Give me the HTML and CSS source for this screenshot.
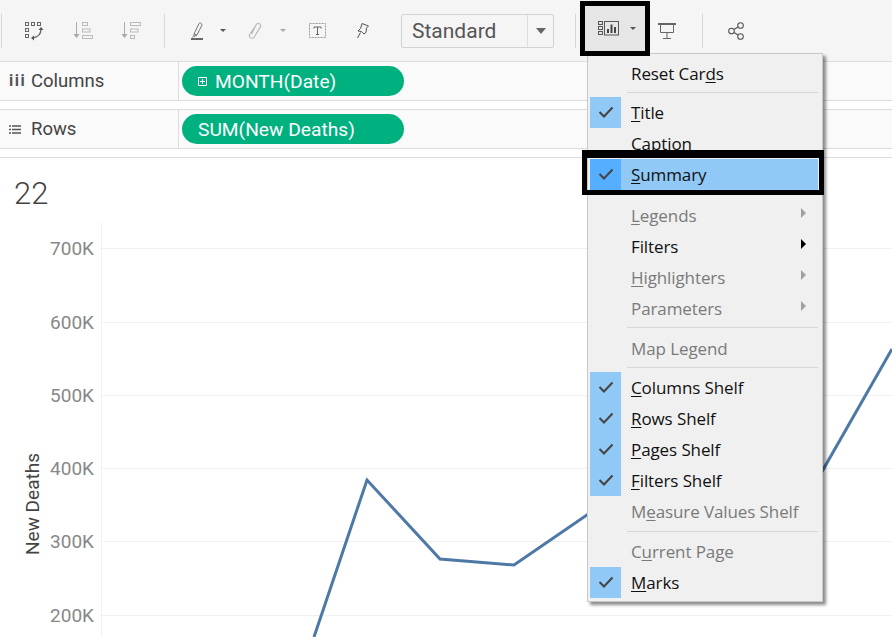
FILE: index.html
```html
<!DOCTYPE html>
<html lang="en">
<head>
<meta charset="utf-8">
<title>Worksheet</title>
<link rel="stylesheet" href="styles.css">
</head>
<body>
<div class="toolbar">
  <span class="tsep tsep-a"></span>
  <svg class="ico ico-swap" viewBox="0 0 20 20"><g fill="none" stroke="#666" stroke-width="1"><rect x="1.5" y="1.5" width="3" height="3"/><rect x="7.5" y="1.5" width="3" height="3"/><rect x="13.5" y="1.5" width="3" height="3"/><rect x="1.5" y="7.5" width="3" height="3"/><rect x="1.5" y="13.5" width="3" height="3"/><path d="M17 8c0 5-3 8-8 9" stroke-width="1.3"/></g><path d="M14.5 9l2.5-3 2.5 3zM10 14.500l-3 2.500 3 2.500z" fill="#555"/></svg>
  <svg class="ico ico-asc" viewBox="0 0 20 20"><g fill="none" stroke="#bbb"><path d="M3.500 1v14" stroke="#aaa"/><rect x="9.500" y="1.500" width="5" height="3"/><rect x="9.500" y="8" width="7.500" height="3"/><rect x="9.500" y="14.500" width="10" height="3"/></g><path d="M.5 13h6l-3 4z" fill="#aaa"/></svg>
  <svg class="ico ico-desc" viewBox="0 0 20 20"><g fill="none" stroke="#bbb"><path d="M3.500 1v14" stroke="#aaa"/><rect x="9.500" y="1.500" width="10" height="3"/><rect x="9.500" y="8" width="7.500" height="3"/><rect x="9.500" y="14.500" width="4" height="3"/></g><path d="M.5 13h6l-3 4z" fill="#aaa"/></svg>
  <span class="tsep tsep-b"></span>
  <svg class="ico ico-pen" viewBox="0 0 12 18"><path d="M3 12 8 1.500C8.500.5 11 1 11 3L6 13 3 14.500zM3 12l3 1M2.500 14 1.500 15.500" fill="none" stroke="#777"/><rect x="0" y="16" width="12" height="2" fill="#666"/></svg>
  <i class="caret caret-pen"></i>
  <svg class="ico ico-clip" viewBox="2 0 11 15"><path d="M4.500 10.500 8.500 2.500c1.200-2.300 5-.9 3.800 1.800L7 13c-1.300 2.500-5.300 1.200-4.300-1.700L7.500 4" fill="none" stroke="#b8b8b8" stroke-width="1"/></svg>
  <i class="caret caret-clip"></i>
  <svg class="ico ico-text" viewBox="0 0 17 15"><rect x=".5" y=".5" width="16" height="14" fill="none" stroke="#999" stroke-dasharray="2 1"/><path d="M5 5.500v-1.500h7v1.500M8.500 4v7.500M7 11.500h3" fill="none" stroke="#666"/></svg>
  <svg class="ico ico-pin" viewBox="0 0 12 16"><path d="M5 .5 11.500 3 9.500 5 9 9.500 7 11 4.500 8.500 1 8 3.500 5.500z" fill="none" stroke="#555"/><path d="M3.500 9.500 .5 15" stroke="#555" fill="none"/></svg>
  <div class="fit-select"><span class="fit-value">Standard</span><span class="fit-arrow"><i class="fit-caret"></i></span></div>
  <span class="tsep tsep-c"></span>
  <div class="cards-btn">
    <svg class="ico-cards" viewBox="0 0 21 15"><g fill="none" stroke="#555"><rect x=".5" y=".5" width="4" height="3"/><rect x=".5" y="5.500" width="4" height="3"/><rect x=".5" y="10.500" width="4" height="3"/><rect x="6.500" y=".5" width="14" height="13.500"/></g><path d="M9 8h2v4H9zM12.500 3.500h2V12h-2zM16 6h2v6h-2z" fill="#444"/></svg>
    <i class="caret caret-cards"></i>
  </div>
  <svg class="ico ico-present" viewBox="0 0 18 18"><g fill="none" stroke="#666"><path d="M2.500 2.500v8h13v-8"/><path d="M9 10.500v6M5 16.500h8"/></g><rect x="0" y="1" width="18" height="2" fill="#666"/></svg>
  <span class="tsep tsep-d"></span>
  <svg class="ico ico-share" viewBox="0 0 16 18"><g fill="none" stroke="#555" stroke-width="1.100"><circle cx="3.500" cy="9" r="2.800"/><circle cx="12.500" cy="3.500" r="2.800"/><circle cx="12.500" cy="14.500" r="2.800"/><path d="M6 7.500l4-2.500M6 10.500l4 2.500"/></g></svg>
</div>

<div class="shelf">
  <div class="shelf-label"><span class="shelf-glyph">iii</span><span>Columns</span></div>
  <div class="shelf-well"><div class="pill pill-month"><svg class="plus" viewBox="0 0 9 9"><path d="M.5.500h8v8h-8zM4.500 2v5M2 4.500h5" fill="none" stroke="#fff"/></svg>MONTH(Date)</div></div>
</div>
<div class="shelf shelf-rows">
  <div class="shelf-label"><svg class="rows-glyph" viewBox="0 0 12 9"><path d="M0 1h2M3 1h9M0 4.500h2M3 4.500h9M0 8h2M3 8h9" stroke="#555" stroke-width="1.500" fill="none"/></svg><span>Rows</span></div>
  <div class="shelf-well"><div class="pill pill-sum">SUM(New Deaths)</div></div>
</div>

<div class="view">
  <div class="sheet-title">22</div>
  <div class="chart">
    <svg class="plot" viewBox="0 0 892 414" aria-hidden="true">
      <g stroke="#f0f0f0" fill="none">
        <path d="M101.500 0v414"/>
        <path d="M101 25.500h791M101 99.500h791M101 172.500h791M101 245.500h791M101 318.500h791M101 392.500h791"/>
      </g>
      <polyline points="314,414 367,257 440,336 514,342 600,283 820,252 892,126" fill="none" stroke="#4e79a7" stroke-width="3"/>
    </svg>
    <div class="ylabel y700">700K</div>
    <div class="ylabel y600">600K</div>
    <div class="ylabel y500">500K</div>
    <div class="ylabel y400">400K</div>
    <div class="ylabel y300">300K</div>
    <div class="ylabel y200">200K</div>
    <div class="axis-title">New Deaths</div>
  </div>
</div>

<div class="menu">
  <div class="item"><span class="check"></span>Reset Car<u>d</u>s</div>
  <div class="sep sep-top"></div>
  <div class="item"><span class="check on"><svg viewBox="0 0 16 12"><path d="M1.500 6l4.500 4.500L14.500 1.500" /></svg></span><u>T</u>itle</div>
  <div class="item"><span class="check"></span>Caption</div>
  <div class="item item-hl"><span class="check on strong"><svg viewBox="0 0 16 12"><path d="M1.500 6l4.500 4.500L14.500 1.500" /></svg></span><u>S</u>ummary</div>
  <div class="gap"></div>
  <div class="item off"><span class="check"></span><u>L</u>egends<i class="sub"></i></div>
  <div class="item"><span class="check"></span>Filters<i class="sub"></i></div>
  <div class="item off"><span class="check"></span><u>H</u>ighlighters<i class="sub"></i></div>
  <div class="item off"><span class="check"></span>Parameters<i class="sub"></i></div>
  <div class="sep sep-a"></div>
  <div class="item off"><span class="check"></span>Map Le<u>g</u>end</div>
  <div class="sep sep-top"></div>
  <div class="item"><span class="check on"><svg viewBox="0 0 16 12"><path d="M1.500 6l4.500 4.500L14.500 1.500" /></svg></span><u>C</u>olumns Shelf</div>
  <div class="item"><span class="check on"><svg viewBox="0 0 16 12"><path d="M1.500 6l4.500 4.500L14.500 1.500" /></svg></span><u>R</u>ows Shelf</div>
  <div class="item"><span class="check on"><svg viewBox="0 0 16 12"><path d="M1.500 6l4.500 4.500L14.500 1.500" /></svg></span><u>P</u>ages Shelf</div>
  <div class="item"><span class="check on"><svg viewBox="0 0 16 12"><path d="M1.500 6l4.500 4.500L14.500 1.500" /></svg></span><u>F</u>ilters Shelf</div>
  <div class="item off"><span class="check"></span>M<u>e</u>asure Values Shelf</div>
  <div class="sep sep-b"></div>
  <div class="item off"><span class="check"></span>C<u>u</u>rrent Page</div>
  <div class="item"><span class="check on"><svg viewBox="0 0 16 12"><path d="M1.500 6l4.500 4.500L14.500 1.500" /></svg></span><u>M</u>arks</div>
</div>
<div class="summary-frame"></div>
</body>
</html>
```
FILE: styles.css
```css
* { box-sizing: border-box; }
html, body { margin: 0; height: 100%; }
body {
  width: 892px;
  height: 637px;
  overflow: hidden;
  position: relative;
  background: #fff;
  font-family: "Open Sans", "Liberation Sans", sans-serif;
  color: #333;
}

/* toolbar */
.toolbar {
  height: 62px;
  background: #f5f5f5;
  border-bottom: 1px solid #dcdcdc;
  display: flex;
  align-items: center;
  flex: none;
}
.ico { flex: none; display: block; }
.tsep { flex: none; width: 1px; height: 34px; background: #d6d6d6; }
.tsep-a { margin-left: 1px; }
.ico-swap { width: 20px; height: 20px; margin-left: 22px; }
.ico-asc { width: 20px; height: 20px; margin-left: 29px; }
.ico-desc { width: 20px; height: 20px; margin-left: 28px; }
.tsep-b { margin-left: 23px; }
.ico-pen { width: 12px; height: 18px; margin-left: 26px; }
.caret { flex: none; width: 0; height: 0; border-style: solid; border-width: 3px 3px 0; border-color: #555 transparent transparent; }
.caret-pen { margin-left: 17px; }
.ico-clip { width: 14px; height: 17px; margin-left: 22px; }
.caret-clip { margin-left: 18px; border-top-color: #aaa; }
.ico-text { width: 17px; height: 15px; margin-left: 23px; }
.ico-pin { width: 12px; height: 16px; margin-left: 31px; }
.fit-select {
  flex: none;
  margin-left: 32px;
  width: 153px;
  height: 34px;
  border: 1px solid #d2d2d2;
  border-radius: 2px;
  display: flex;
  align-items: center;
  background: #f5f5f5;
}
.fit-value { flex: 1; padding-left: 10px; font-size: 21px; color: #555; font-family: Roboto, sans-serif; line-height: 32px; }
.fit-arrow { width: 26px; height: 32px; border-left: 1px solid #dedede; display: flex; align-items: center; justify-content: center; }
.fit-caret { width: 0; height: 0; border-style: solid; border-width: 6px 5px 0; border-color: #666 transparent transparent; }
.tsep-c { margin-left: 21px; }
.cards-btn {
  flex: none;
  position: relative;
  z-index: 5;
  align-self: flex-start;
  margin-left: 4px;
  margin-top: 1px;
  width: 70px;
  height: 55px;
  background: #e6e6e6;
  border: 5px solid #000;
  display: flex;
  align-items: center;
}
.ico-cards { width: 21px; height: 15px; margin-left: 13px; display: block; }
.caret-cards { margin-left: 11px; }
.ico-present { width: 18px; height: 18px; margin-left: 8px; }
.tsep-d { margin-left: 26px; }
.ico-share { width: 16px; height: 18px; margin-left: 25px; }

/* shelves */
.shelf {
  height: 39px;
  background: #fafafa;
  border-bottom: 1px solid #dcdcdc;
  display: flex;
}
.shelf-rows { margin-top: 8px; border-top: 1px solid #dcdcdc; height: 40px; }
.shelf-label {
  width: 179px;
  flex: none;
  border-right: 1px solid #dcdcdc;
  display: flex;
  align-items: center;
  font-size: 18.500px;
  color: #444;
  font-family: Roboto, sans-serif;
  padding-left: 9px;
  gap: 9px;
}
.shelf-glyph { width: 13px; font-size: 16px; font-weight: 700; letter-spacing: 1.500px; color: #555; line-height: 1; }
.rows-glyph { width: 12px; height: 9px; margin-right: 1px; }
.shelf-well { flex: 1; display: flex; align-items: center; padding-left: 3px; }
.pill {
  height: 30px;
  border-radius: 15px;
  background: #00b180;
  color: #fff;
  font-family: Roboto, sans-serif;
  font-size: 19.200px;
  display: flex;
  align-items: center;
  width: 222px;
  padding-left: 16px;
}
.plus { width: 9px; height: 9px; margin-right: 8px; flex: none; }

/* view */
.view {
  margin-top: 8px;
  border-top: 1px solid #dcdcdc;
  height: 480px;
  background: #fff;
}
.sheet-title { height: 65px; padding: 17px 0 0 14px; font-family: Roboto, sans-serif; font-weight: 300; font-size: 31px; line-height: 38px; color: #444; }
.chart { position: relative; height: 414px; }
.plot { display: block; width: 892px; height: 414px; }
.ylabel { position: absolute; right: 798px; font-size: 19px; line-height: 20px; color: #888; font-family: Roboto, sans-serif; }
.y700 { top: 16px; }
.y600 { top: 90px; }
.y500 { top: 163px; }
.y400 { top: 236px; }
.y300 { top: 309px; }
.y200 { top: 383px; }
.axis-title {
  position: absolute;
  left: 33px;
  top: 281px;
  transform: translate(-50%, -50%) rotate(-90deg);
  white-space: nowrap;
  font-size: 19px;
  line-height: 20px;
  color: #444;
  font-family: Roboto, sans-serif;
}

/* menu */
.menu {
  position: absolute;
  left: 587px;
  top: 53px;
  width: 236px;
  height: 549px;
  padding: 4px 4px 0 2px;
  background: #f0f0f0;
  border: 1px solid #c8c8c8;
  box-shadow: 3px 3px 3px rgba(0, 0, 0, .45);
  font-size: 17px;
  letter-spacing: -.1px;
  color: #111;
  z-index: 2;
}
.item { height: 31px; display: flex; align-items: center; white-space: pre; position: relative; line-height: 31px; }
.item u { text-underline-offset: 2px; text-decoration-thickness: 1px; }
.item.off { color: #7a7a7a; }
.item-hl { background: #90c8f6; }
.check { width: 31px; height: 31px; flex: none; margin-right: 10px; display: flex; align-items: center; justify-content: center; }
.check.on { background: #90c8f6; }
.check.strong { background: #55aeff; }
.check svg { width: 16px; height: 12px; fill: none; stroke: #444; stroke-width: 2; margin-top: -1px; }
.sep { height: 1px; background: #d7d7d7; margin-left: 37px; }
.sep-top { margin-top: 3px; margin-bottom: 4px; }
.sep-a { margin-top: 3px; margin-bottom: 5px; }
.sep-b { margin-top: 4px; margin-bottom: 4px; }
.gap { height: 10px; }
.sub { position: absolute; left: 211px; top: 8px; width: 0; height: 0; border-style: solid; border-width: 5px 0 5px 5px; border-color: transparent transparent transparent #a0a0a0; }
.item:not(.off) .sub { border-left-color: #000; }
.summary-frame {
  position: absolute;
  left: 582px;
  top: 150px;
  width: 242px;
  height: 45px;
  border: 5px solid #000;
  border-top-width: 8px;
  z-index: 3;
}
```
